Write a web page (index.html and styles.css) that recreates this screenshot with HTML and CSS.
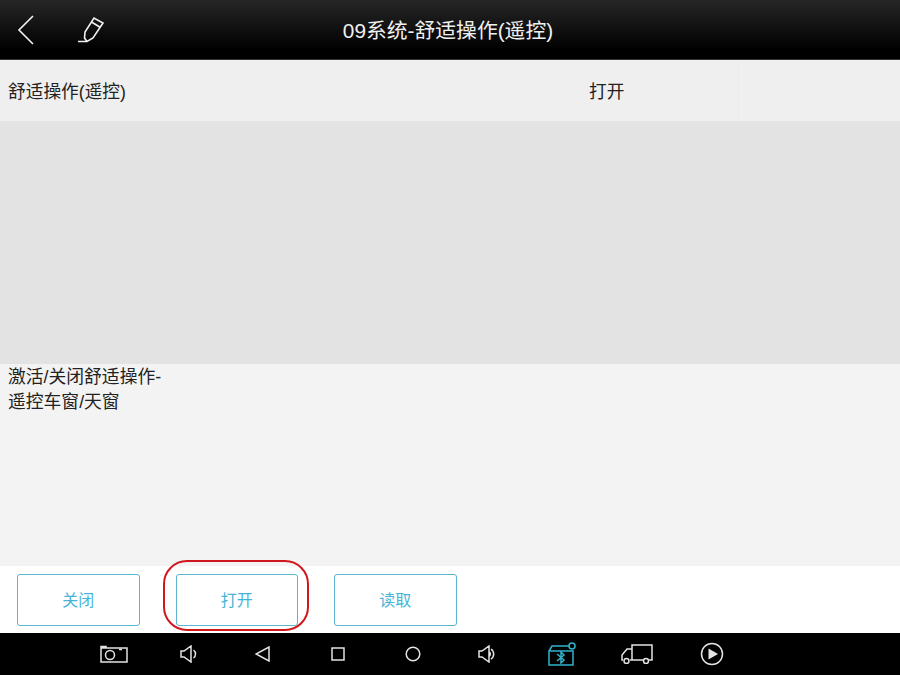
FILE: index.html
```html
<!DOCTYPE html>
<html lang="zh-CN">
<head>
  <meta charset="UTF-8">
  <title>09系统-舒适操作(遥控)</title>
  <link rel="stylesheet" href="styles.css">
</head>
<body>
  <div class="screen">
    <header class="topbar">
      <div class="top-icons">
        <svg class="icon-back" width="20" height="32" viewBox="0 0 20 32"><path d="M17 2 L3 16 L17 30"/></svg>
        <svg class="icon-pen" width="28" height="28" viewBox="0 0 28 28"><path d="M0 25.500 H9 L15 22 L25 7 L16 2 L7 16 L6.500 22 L9 25.500 M13.500 6 L22.500 11.500"/></svg>
      </div>
      <h1>09系统-舒适操作(遥控)</h1>
    </header>

    <div class="row">
      <span class="row-name">舒适操作(遥控)</span>
      <span class="row-value">打开</span>
      <span class="row-unit"></span>
    </div>
    <div class="blank"></div>
    <div class="desc">激活/关闭舒适操作-<br>遥控车窗/天窗</div>

    <div class="actions">
      <button>关闭</button>
      <button class="marked">打开</button>
      <button>读取</button>
    </div>

    <nav class="navbar">
      <span class="nav-item">
        <svg width="28" height="18" viewBox="0 0 28 18"><path d="M1 3 H27 V17 H1 Z M1 3 V1.500 H6 V3"/><circle cx="10" cy="10" r="4.500"/><path d="M19 4.500 H22"/></svg>
      </span>
      <span class="nav-item">
        <svg width="18" height="18" viewBox="0 0 18 18"><path d="M1 6 H4 L11 1 V17 L4 12 H1 Z M13.500 5 A5 5 0 0 1 13.500 13"/></svg>
      </span>
      <span class="nav-item">
        <svg width="16" height="16" viewBox="0 0 16 16"><path d="M14 1 V15 L1 8 Z"/></svg>
      </span>
      <span class="nav-item">
        <svg width="14" height="14" viewBox="0 0 14 14"><rect x="1" y="1" width="12" height="12"/></svg>
      </span>
      <span class="nav-item">
        <svg width="16" height="16" viewBox="0 0 16 16"><circle cx="8" cy="8" r="6.800"/></svg>
      </span>
      <span class="nav-item">
        <svg width="20" height="18" viewBox="0 0 20 18"><path d="M1 6 H4 L11 1 V17 L4 12 H1 Z M13 4 A6 6 0 0 1 13 14 M11 6.500 A3 3 0 0 1 11 11.500"/></svg>
      </span>
      <span class="nav-item">
        <svg class="icon-bt" width="28" height="24" viewBox="0 0 28 24"><path d="M1 9 H25 V23 H1 Z M1 9 L4 4 H21"/><path d="M9 12 L16 18 L13 21 V10 L16 13 L9 19"/><circle cx="24" cy="4" r="3"/></svg>
      </span>
      <span class="nav-item">
        <svg width="32" height="20" viewBox="0 0 32 20"><path d="M11 16 V1 H31 V16 H28 M22 16 H9 M11 5 H6 L1 11 V16 H2"/><circle cx="5.500" cy="17" r="2.500"/><circle cx="25" cy="17" r="2.500"/></svg>
      </span>
      <span class="nav-item">
        <svg width="24" height="24" viewBox="0 0 24 24"><circle cx="12" cy="12" r="10.500"/><path class="solid" d="M8.500 6.500 L18 12 L8.500 17.500 Z"/></svg>
      </span>
    </nav>
  </div>
</body>
</html>
```

FILE: styles.css
```css
body { margin: 0; font-family: "Liberation Sans", "Noto Sans CJK SC", sans-serif; }
.screen { width: 900px; height: 675px; display: flex; flex-direction: column; overflow: hidden; }

.topbar { height: 60px; box-sizing: border-box; background: linear-gradient(#262626, #000 85%); border-bottom: 1px solid #333; display: flex; align-items: center; position: relative; }
.topbar h1 { flex: 1; margin: 0 0 2px; padding-right: 4px; text-align: center; color: #f0f0f0; font-size: 20.800px; font-weight: normal; }
.top-icons { position: absolute; left: 16px; top: 14px; display: flex; gap: 42px; align-items: center; }
.top-icons svg { fill: none; stroke: #f2f2f2; stroke-width: 1.600; }

.row { height: 61px; flex: none; background: #efefef; display: flex; align-items: center; color: #222; font-size: 17.700px; padding-bottom: 2px; box-sizing: border-box; }
.row-name { width: 589px; padding-left: 8px; box-sizing: border-box; }
.row-value { width: 149px; border-right: 1px solid #ebebeb; height: 100%; display: flex; align-items: center; }

.blank { height: 243px; flex: none; background: #e3e3e3; }
.desc { height: 202px; flex: none; box-sizing: border-box; background: #f3f3f3; padding: 1px 8px 0; color: #222; font-size: 17.800px; line-height: 25px; }

.actions { height: 67px; flex: none; box-sizing: border-box; background: #fff; padding: 8px 17px 6px; display: flex; gap: 36px; }
.actions button { width: 122.500px; height: 52px; background: #fff; border: 1.500px solid #5ab5d2; border-radius: 3px; color: #45b4d8; font-family: inherit; font-size: 16px; padding: 0 0 2px; position: relative; }
.actions .marked::after { content: ""; position: absolute; left: -13.500px; right: -12px; top: -15px; bottom: -6px; border: 2.500px solid #d0171d; border-radius: 24px; }

.navbar { height: 42px; flex: none; background: #000; padding-left: 76.500px; display: flex; align-items: center; }
.nav-item { width: 74.750px; display: flex; justify-content: center; align-items: center; }
.nav-item svg { fill: none; stroke: #e4e4e4; stroke-width: 1.500; }
.nav-item .solid { fill: #e4e4e4; stroke: none; }
.nav-item .icon-bt { stroke: #2fb4cc; }
```
